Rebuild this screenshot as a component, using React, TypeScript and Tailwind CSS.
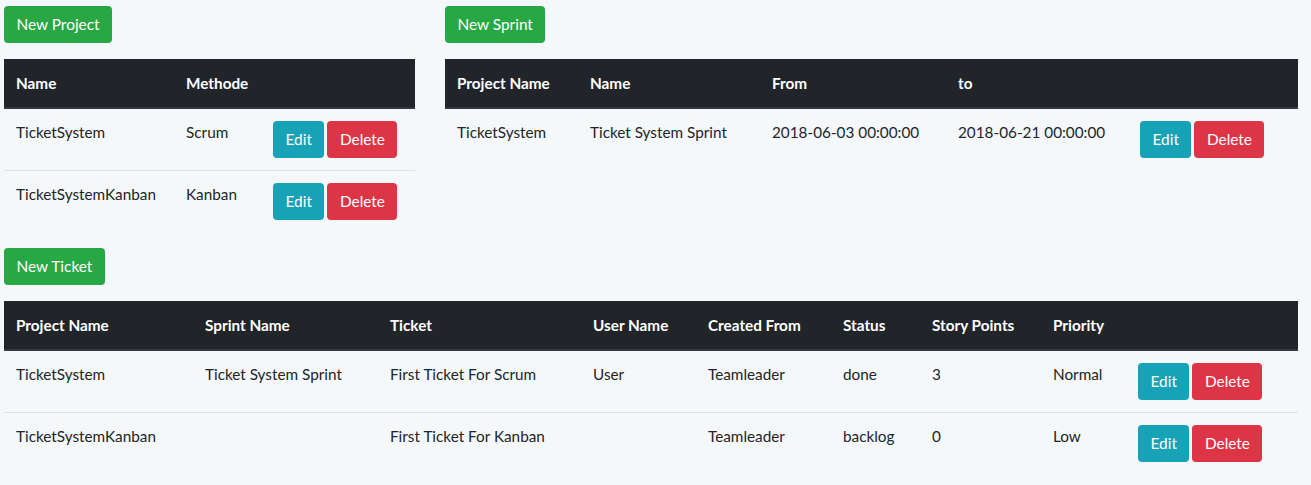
import React from "react"

const font = { fontFamily: "Lato, 'Open Sans', sans-serif" }

function Btn({ kind, children }: { kind: "new" | "edit" | "delete"; children: React.ReactNode }) {
  const color =
    kind === "new" ? "bg-[#28a745]" : kind === "edit" ? "bg-[#17a2b8]" : "bg-[#dc3545]"
  return (
    <button
      className={`${color} inline-flex items-center justify-center h-[37px] px-[12.5px] rounded-[4px] text-white text-[15.4px] leading-none align-top`}
    >
      {children}
    </button>
  )
}

function Actions() {
  return (
    <div className="flex gap-[3px]">
      <Btn kind="edit">Edit</Btn>
      <Btn kind="delete">Delete</Btn>
    </div>
  )
}

type Col = { label: string; w: string }

function DataTable({ cols, rows, width }: { cols: Col[]; rows: string[][]; width: string }) {
  return (
    <table className={`${width} table-fixed border-collapse text-[15.3px] text-[#212529]`}>
      <thead>
        <tr className="bg-[#212529] text-white">
          {cols.map((c, i) => (
            <th
              key={i}
              className={`${c.w} px-3 py-3 leading-6 text-left font-bold border-b-2 border-[#32383e]`}
            >
              {c.label || "\u00a0"}
            </th>
          ))}
        </tr>
      </thead>
      <tbody>
        {rows.map((r, ri) => (
          <tr key={ri} className={ri > 0 ? "border-t border-[#dee2e6]" : ""}>
            {r.map((cell, ci) => (
              <td key={ci} className="px-3 py-3 align-top leading-[22px]">
                {cell}
              </td>
            ))}
            <td className="px-3 py-3 align-top">
              <Actions />
            </td>
          </tr>
        ))}
      </tbody>
    </table>
  )
}

export default function App() {
  return (
    <div className="min-h-screen bg-[#f5f8fa] px-1 pt-[6px]" style={font}>
      <div className="flex gap-[30px]">
        <div className="flex flex-col gap-4 items-start">
          <Btn kind="new">New Project</Btn>
          <DataTable
            width="w-[411px]"
            cols={[
              { label: "Name", w: "w-[170px]" },
              { label: "Methode", w: "w-[87px]" },
              { label: "", w: "w-[154px]" },
            ]}
            rows={[
              ["TicketSystem", "Scrum"],
              ["TicketSystemKanban", "Kanban"],
            ]}
          />
        </div>
        <div className="flex flex-col gap-4 items-start">
          <Btn kind="new">New Sprint</Btn>
          <DataTable
            width="w-[853px]"
            cols={[
              { label: "Project Name", w: "w-[133px]" },
              { label: "Name", w: "w-[182px]" },
              { label: "From", w: "w-[186px]" },
              { label: "to", w: "w-[182px]" },
              { label: "", w: "w-[170px]" },
            ]}
            rows={[["TicketSystem", "Ticket System Sprint", "2018-06-03 00:00:00", "2018-06-21 00:00:00"]]}
          />
        </div>
      </div>
      <div className="flex flex-col gap-4 items-start mt-4">
        <Btn kind="new">New Ticket</Btn>
        <DataTable
          width="w-[1294px]"
          cols={[
            { label: "Project Name", w: "w-[189px]" },
            { label: "Sprint Name", w: "w-[185px]" },
            { label: "Ticket", w: "w-[203px]" },
            { label: "User Name", w: "w-[115px]" },
            { label: "Created From", w: "w-[135px]" },
            { label: "Status", w: "w-[89px]" },
            { label: "Story Points", w: "w-[121px]" },
            { label: "Priority", w: "w-[85px]" },
            { label: "", w: "w-[172px]" },
          ]}
          rows={[
            ["TicketSystem", "Ticket System Sprint", "First Ticket For Scrum", "User", "Teamleader", "done", "3", "Normal"],
            ["TicketSystemKanban", "", "First Ticket For Kanban", "", "Teamleader", "backlog", "0", "Low"],
          ]}
        />
      </div>
    </div>
  )
}
